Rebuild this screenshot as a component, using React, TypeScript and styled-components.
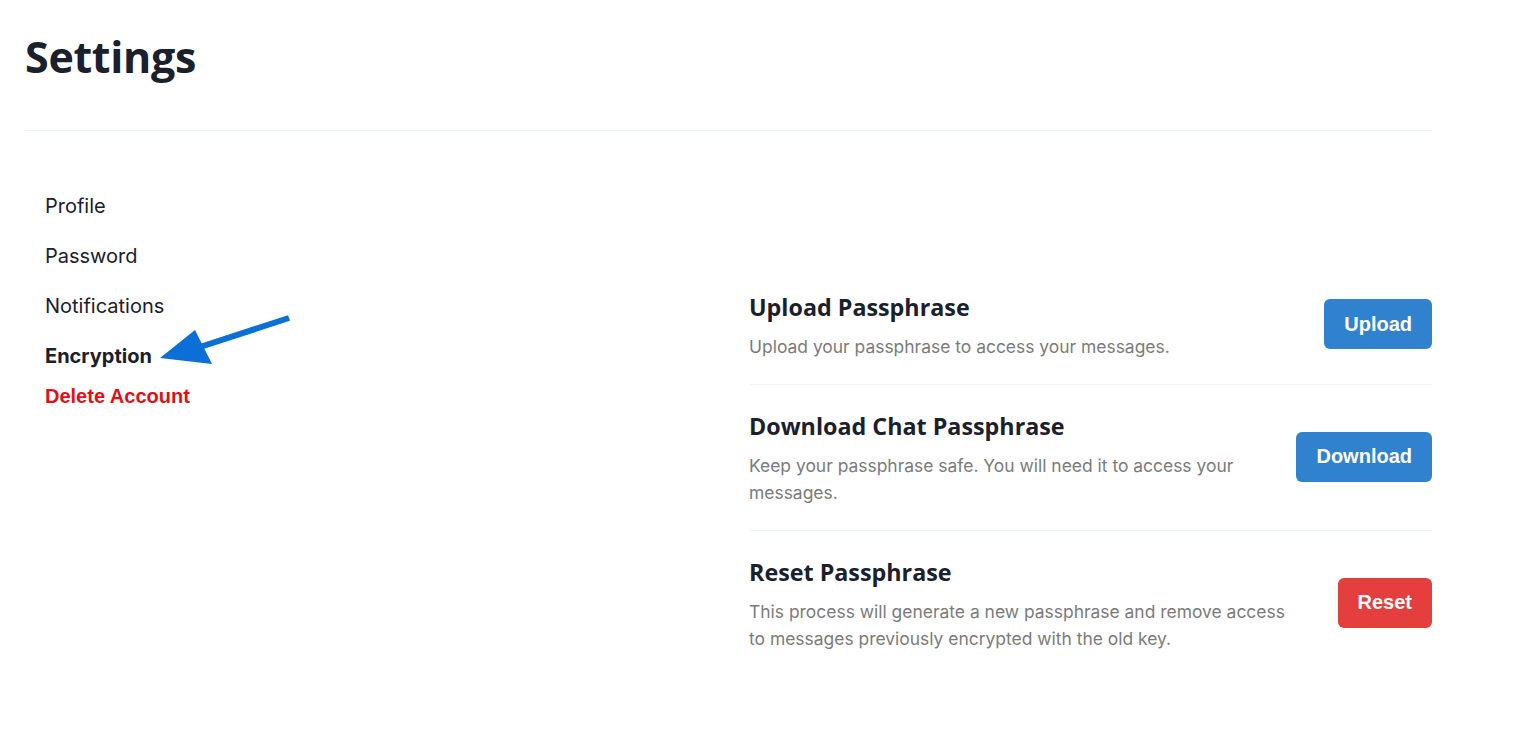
import React from "react";
import styled, { createGlobalStyle } from "styled-components";

const GlobalStyle = createGlobalStyle`
  html, body { margin: 0; padding: 0; background: #ffffff; }
  body { font-family: Inter, "Noto Sans", sans-serif; color: #1a202c; }
`;

const Page = styled.div`
  padding: 22px 0 0 25px;
  width: 1407px;
  position: relative;
`;

const Title = styled.h1`
  margin: 0;
  font-family: "Open Sans", "Noto Sans", sans-serif;
  font-weight: 700;
  font-size: 43px;
  line-height: 70px;
  color: #1a202c;
  letter-spacing: -0.3px;
`;

const Divider = styled.hr`
  margin: 38px 0 0;
  border: none;
  border-top: 1px solid #edf2f7;
`;

const Body = styled.div`
  display: grid;
  grid-template-columns: 724px 683px;
`;

const Nav = styled.nav`
  display: flex;
  flex-direction: column;
  padding: 61px 0 0 20px;
`;

const NavItem = styled.a<{ $active?: boolean; $danger?: boolean }>`
  display: block;
  font-family: ${(p) => (p.$danger ? `"Liberation Sans", Arial, sans-serif` : `Inter, sans-serif`)};
  font-size: 20px;
  line-height: 28px;
  margin-bottom: ${(p) => (p.$active ? 12 : 22)}px;
  font-weight: ${(p) => (p.$active || p.$danger ? 700 : 400)};
  color: ${(p) => (p.$danger ? "#e0101a" : "#1a202c")};
  cursor: pointer;
`;

const Panel = styled.section`
  display: flex;
  flex-direction: column;
  padding-top: 135px;
`;

const Row = styled.div<{ $last?: boolean }>`
  display: flex;
  align-items: center;
  justify-content: space-between;
  gap: 48px;
  padding: 26px 0 24px;
  border-bottom: ${(p) => (p.$last ? "none" : "1px solid #edf2f7")};
`;

const Text = styled.div`
  flex: 1;
  display: flex;
  flex-direction: column;
  gap: 11px;
`;

const RowTitle = styled.h2`
  margin: 0;
  font-family: "Open Sans", "Noto Sans", sans-serif;
  font-weight: 700;
  font-size: 23.3px;
  line-height: 30px;
  color: #1a202c;
`;

const RowDesc = styled.p`
  margin: 0;
  font-size: 17.45px;
  line-height: 27px;
  color: #7b7b7b;
`;

const Button = styled.button<{ $variant?: "blue" | "red" }>`
  flex: none;
  height: 50px;
  margin-bottom: 4px;
  padding: 0 20px;
  border: none;
  border-radius: 6px;
  background: ${(p) => (p.$variant === "red" ? "#e53e3e" : "#3182ce")};
  color: #ffffff;
  font-family: "Liberation Sans", Arial, sans-serif;
  font-weight: 700;
  font-size: 20px;
  cursor: pointer;
`;

const Arrow = styled.svg`
  position: absolute;
  left: 155px;
  top: 310px;
  overflow: visible;
`;

export default function App() {
  return (
    <>
      <GlobalStyle />
      <Page>
        <Title>Settings</Title>
        <Divider />
        <Body>
          <Nav>
            <NavItem>Profile</NavItem>
            <NavItem>Password</NavItem>
            <NavItem>Notifications</NavItem>
            <NavItem $active>Encryption</NavItem>
            <NavItem $danger>Delete Account</NavItem>
          </Nav>
          <Panel>
            <Row>
              <Text>
                <RowTitle>Upload Passphrase</RowTitle>
                <RowDesc>Upload your passphrase to access your messages.</RowDesc>
              </Text>
              <Button>Upload</Button>
            </Row>
            <Row>
              <Text>
                <RowTitle>Download Chat Passphrase</RowTitle>
                <RowDesc>
                  Keep your passphrase safe. You will need it to access your messages.
                </RowDesc>
              </Text>
              <Button>Download</Button>
            </Row>
            <Row $last>
              <Text>
                <RowTitle>Reset Passphrase</RowTitle>
                <RowDesc>
                  This process will generate a new passphrase and remove access to
                  messages previously encrypted with the old key.
                </RowDesc>
              </Text>
              <Button $variant="red">Reset</Button>
            </Row>
          </Panel>
        </Body>
        <Arrow width="140" height="60" viewBox="0 0 140 60">
          <line x1="134" y1="8" x2="45" y2="37" stroke="#0b6fd6" strokeWidth="6" strokeLinecap="butt" />
          <polygon points="5,48 40,20 57,54" fill="#0b6fd6" />
        </Arrow>
      </Page>
    </>
  );
}
